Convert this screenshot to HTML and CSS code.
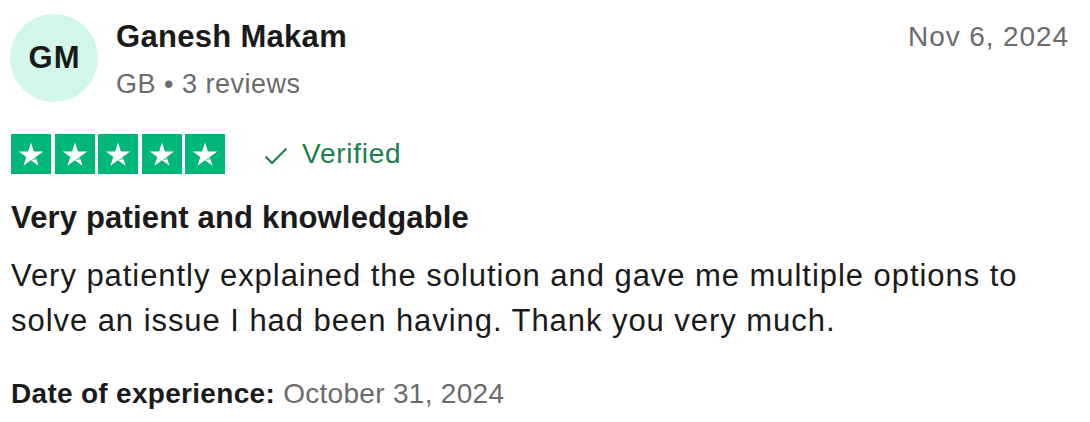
FILE: index.html
```html
<!DOCTYPE html>
<html lang="en">
<head>
<meta charset="utf-8">
<title>Review</title>
<link rel="stylesheet" href="styles.css">
</head>
<body>
<article class="review">
  <header class="head">
    <div class="consumer">
      <div class="avatar">GM</div>
      <div class="info">
        <div class="name">Ganesh Makam</div>
        <div class="meta">GB • 3 reviews</div>
      </div>
    </div>
    <time class="date">Nov 6, 2024</time>
  </header>
  <div class="rating-row">
    <div class="stars">
      <span class="star"><svg viewBox="0 0 40 40" width="40" height="40"><path d="M20 8.5 L22.9 17.4 L32.2 17.4 L24.7 22.9 L27.6 31.8 L20 26.3 L12.4 31.8 L15.3 22.9 L7.8 17.4 L17.1 17.4 Z" fill="#fff"/><path d="M24.7 22.9 L25.6 25.6 L20 26.3 Z" fill="#00b67a" opacity="0.6"/></svg></span>
      <span class="star"><svg viewBox="0 0 40 40" width="40" height="40"><path d="M20 8.5 L22.9 17.4 L32.2 17.4 L24.7 22.9 L27.6 31.8 L20 26.3 L12.4 31.8 L15.3 22.9 L7.8 17.4 L17.1 17.4 Z" fill="#fff"/><path d="M24.7 22.9 L25.6 25.6 L20 26.3 Z" fill="#00b67a" opacity="0.6"/></svg></span>
      <span class="star"><svg viewBox="0 0 40 40" width="40" height="40"><path d="M20 8.5 L22.9 17.4 L32.2 17.4 L24.7 22.9 L27.6 31.8 L20 26.3 L12.4 31.8 L15.3 22.9 L7.8 17.4 L17.1 17.4 Z" fill="#fff"/><path d="M24.7 22.9 L25.6 25.6 L20 26.3 Z" fill="#00b67a" opacity="0.6"/></svg></span>
      <span class="star"><svg viewBox="0 0 40 40" width="40" height="40"><path d="M20 8.5 L22.9 17.4 L32.2 17.4 L24.7 22.9 L27.6 31.8 L20 26.3 L12.4 31.8 L15.3 22.9 L7.8 17.4 L17.1 17.4 Z" fill="#fff"/><path d="M24.7 22.9 L25.6 25.6 L20 26.3 Z" fill="#00b67a" opacity="0.6"/></svg></span>
      <span class="star"><svg viewBox="0 0 40 40" width="40" height="40"><path d="M20 8.5 L22.9 17.4 L32.2 17.4 L24.7 22.9 L27.6 31.8 L20 26.3 L12.4 31.8 L15.3 22.9 L7.8 17.4 L17.1 17.4 Z" fill="#fff"/><path d="M24.7 22.9 L25.6 25.6 L20 26.3 Z" fill="#00b67a" opacity="0.6"/></svg></span>
    </div>
    <div class="verified">
      <svg class="check" viewBox="0 0 24 20" width="24" height="20"><path d="M1.5 10.5 L8 17 L22.5 2.5" fill="none" stroke="#1c7d4d" stroke-width="2"/></svg>
      <span>Verified</span>
    </div>
  </div>
  <h2 class="title">Very patient and knowledgable</h2>
  <p class="body">Very patiently explained the solution and gave me multiple options to solve an issue I had been having. Thank you very much.</p>
  <p class="exp"><b>Date of experience:</b> <span>October 31, 2024</span></p>
</article>
</body>
</html>
```

FILE: styles.css
```css
* { box-sizing: border-box; }
html, body { margin: 0; padding: 0; background: #fff; }
body {
  font-family: "Liberation Sans", Arial, Helvetica, sans-serif;
  color: #1a1a1a;
}
.review {
  width: 1090px;
  padding: 14px 22px 0 11px;
}
.head {
  display: flex;
  justify-content: space-between;
  align-items: flex-start;
}
.consumer {
  display: flex;
  align-items: flex-start;
}
.avatar {
  width: 88px;
  height: 88px;
  margin-left: -1px;
  border-radius: 50%;
  background: #d1f7e8;
  color: #1a1a1a;
  font-weight: 700;
  font-size: 31px;
  letter-spacing: 1px;
  padding-left: 1px;
  display: flex;
  align-items: center;
  justify-content: center;
}
.info {
  margin-left: 18px;
  display: flex;
  flex-direction: column;
}
.name {
  font-size: 31px;
  letter-spacing: 0.3px;
  font-weight: 700;
  line-height: 36px;
  margin-top: 5px;
}
.meta {
  font-size: 27px;
  letter-spacing: 0.5px;
  line-height: 32px;
  color: #6b6b6b;
  margin-top: 13px;
}
.date {
  font-size: 28px;
  letter-spacing: 0.9px;
  line-height: 32px;
  color: #6b6b6b;
  margin-top: 7px;
  margin-right: -1px;
}
.rating-row {
  display: flex;
  align-items: center;
  margin-top: 32px;
}
.stars {
  display: flex;
  gap: 3.5px;
}
.star {
  width: 40px;
  height: 40px;
  background: #00b67a;
  display: block;
}
.star svg { display: block; }
.verified {
  display: flex;
  align-items: center;
  margin-left: 39px;
  color: #1c7d4d;
  font-size: 28px;
  letter-spacing: 0.75px;
}
.check { margin-right: 14px; margin-top: 4px; }
.title {
  margin: 24px 0 0;
  font-size: 31px;
  letter-spacing: 0.17px;
  line-height: 40px;
  font-weight: 700;
}
.body {
  margin: 15px 0 0;
  font-size: 31px;
  letter-spacing: 0.95px;
  line-height: 45px;
  width: 1040px;
}
.exp {
  margin: 35px 0 0;
  font-size: 28px;
  letter-spacing: 0.3px;
  line-height: 32px;
}
.exp b { font-weight: 700; }
.exp span { color: #6b6b6b; }
```
